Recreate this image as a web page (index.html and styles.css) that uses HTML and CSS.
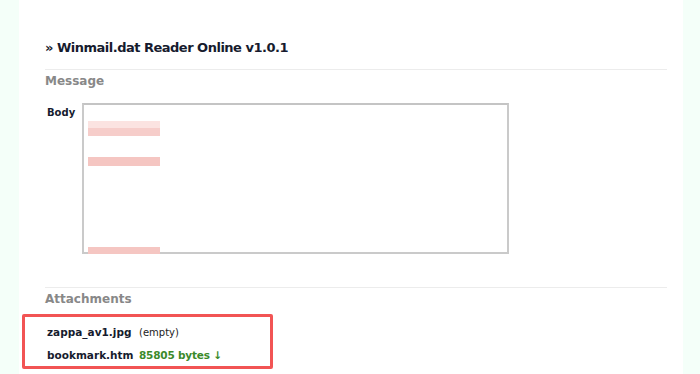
FILE: index.html
```html
<!DOCTYPE html>
<html>
<head>
<meta charset="utf-8">
<link rel="stylesheet" href="styles.css">
</head>
<body>
<div class="page">
  <h1 class="title">» Winmail.dat Reader Online v1.0.1</h1>
  <hr class="rule">
  <h2 class="section">Message</h2>
  <div class="field">
    <div class="label">Body</div>
    <div class="textarea">
      <div class="redact r1"></div>
      <div class="redact r2"></div>
      <div class="spacer"></div>
      <div class="redact r3"></div>
    </div>
  </div>
  <hr class="rule rule2">
  <h2 class="section">Attachments</h2>
  <div class="attach">
    <div class="row"><span class="name">zappa_av1.jpg</span><span class="empty">(empty)</span></div>
    <div class="row"><span class="name">bookmark.htm</span><span class="size">85805 bytes ↓</span></div>
  </div>
</div>
</body>
</html>
```
FILE: styles.css
```css
html, body {
  margin: 0;
  padding: 0;
  background: #f4fff9;
  font-family: "DejaVu Sans", Verdana, sans-serif;
  color: #161b2e;
}
.page {
  background: #fff;
  margin: 0 17px 0 19px;
  height: 374px;
  padding: 39px 16px 0 26px;
  box-sizing: border-box;
}
.title {
  font-size: 13px;
  letter-spacing: -0.5px;
  font-weight: bold;
  margin: 0;
  line-height: 18px;
}
.rule {
  border: 0;
  border-top: 1px solid #ececec;
  margin: 12px 0 0 0;
}
.section {
  font-size: 12px;
  font-weight: bold;
  color: #888;
  margin: 3px 0 0 0;
  line-height: 16px;
}
.field {
  display: flex;
  margin-top: 14px;
}
.label {
  font-size: 10px;
  font-weight: bold;
  width: 37px;
  padding-left: 2px;
  box-sizing: border-box;
  line-height: 14px;
  margin-top: 3px;
}
.textarea {
  width: 427px;
  height: 151px;
  border: 2px solid #cacaca;
  border-top-color: #c4c4c4;
  box-sizing: border-box;
  padding: 16px 0 0 4px;
  display: flex;
  flex-direction: column;
}
.redact {
  width: 72px;
  background: #f5c6c2;
  filter: blur(0.6px);
}
.r1 { height: 15px; background: linear-gradient(#fbe3e1 50%, #f6cdca 50%); }
.r2 { height: 9px; margin-top: 21px; }
.spacer { flex: 1; }
.r3 { height: 7px; margin-bottom: -2px; }
.rule2 { margin-top: 33px; }
.attach {
  margin: 7px 0 0 -23px;
  width: 251px;
  height: 55px;
  border: 3px solid #f25454;
  border-radius: 2px;
  box-sizing: border-box;
  padding: 4px 0 0 22px;
  font-size: 10.5px;
}
.row {
  line-height: 23px;
  height: 23px;
  display: flex;
}
.name {
  font-weight: bold;
  width: 92px;
}
.empty { color: #222; font-size: 10px; }
.size { color: #3b8a2a; font-weight: bold; letter-spacing: -0.2px; }
```
